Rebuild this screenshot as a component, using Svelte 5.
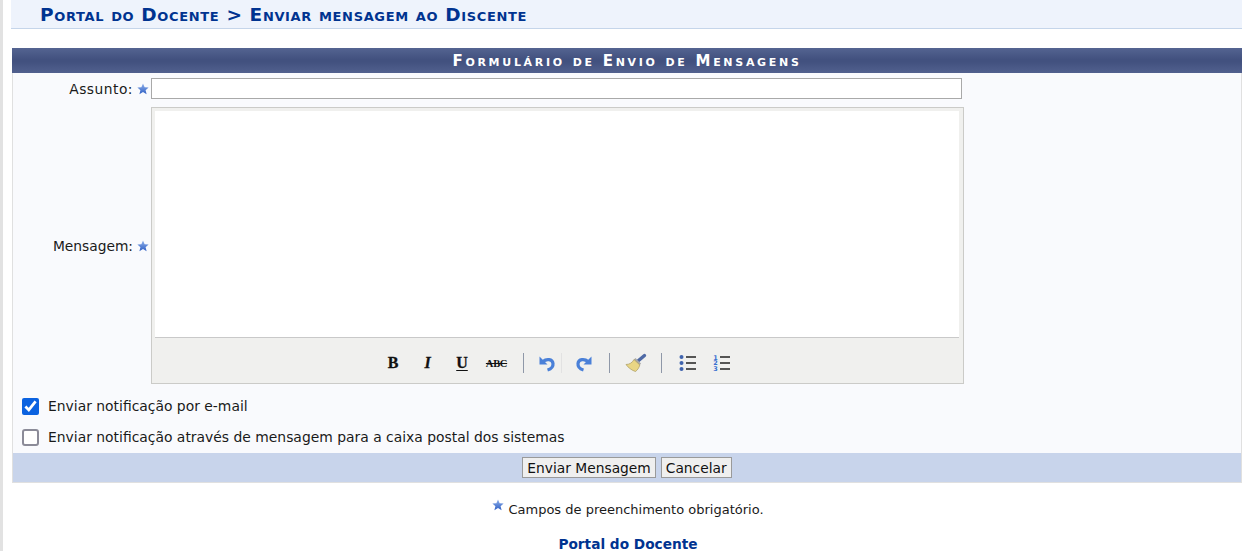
<script>
  const opts = [
    { label: 'Enviar notificação por e-mail', checked: true },
    { label: 'Enviar notificação através de mensagem para a caixa postal dos sistemas', checked: false }
  ];
</script>

<svg width="0" height="0" class="defs" aria-hidden="true">
  <defs>
    <linearGradient id="st" x1="0" y1="0" x2="0" y2="1">
      <stop offset="0" stop-color="#8fb0ea" />
      <stop offset="1" stop-color="#2f5fc4" />
    </linearGradient>
    <symbol id="star" viewBox="0 0 12 12">
      <path d="M6 .6 7.6 4.3 11.6 4.6 8.6 7.2 9.6 11.2 6 9.1 2.4 11.2 3.4 7.2.4 4.6 4.4 4.3Z" fill="url(#st)" />
    </symbol>
  </defs>
</svg>

<div class="page">
  <header class="crumb"><h2>Portal do Docente &gt; Enviar mensagem ao Discente</h2></header>

  <form class="form" onsubmit={(e) => e.preventDefault()}>
    <div class="caption">Formulário de Envio de Mensagens</div>
    <div class="body">
      <div class="fields">
        <label class="lbl wide" for="assunto">Assunto:</label>
        <svg class="star"><use href="#star" /></svg>
        <input id="assunto" class="text" type="text" />

        <span class="lbl">Mensagem:</span>
        <svg class="star"><use href="#star" /></svg>
        <div class="editor">
          <div class="area"></div>
          <div class="toolbar">
            <span class="btn b">B</span>
            <span class="btn i">I</span>
            <span class="btn u">U</span>
            <span class="btn s">ABC</span>
            <span class="sep s1"></span>
            <span class="btn undo">
              <svg width="20" height="20" viewBox="0 0 20 20">
                <path d="M6 8.500C9.500 5.500 15.500 6 16 10.500 16.300 13.500 14 16 10.500 17" fill="none" stroke="#4a80d8" stroke-width="3.200" />
                <path d="M2.500 3.500V11.500H10.500Z" fill="#4a80d8" />
              </svg>
            </span>
            <span class="sep faint"></span>
            <span class="btn redo">
              <svg width="20" height="20" viewBox="0 0 20 20">
                <path d="M14 8.500C10.500 5.500 4.500 6 4 10.500 3.700 13.500 6 16 9.500 17" fill="none" stroke="#4a80d8" stroke-width="3.200" />
                <path d="M17.500 3.500V11.500H9.500Z" fill="#4a80d8" />
              </svg>
            </span>
            <span class="sep s2"></span>
            <span class="btn broom">
              <svg width="22" height="20" viewBox="0 0 22 20">
                <path d="M13 8 19.500 2.500" stroke="#4f6aa5" stroke-width="3.400" stroke-linecap="round" />
                <path d="M10.500 5 16 10.500 14.500 12.500 8.500 7Z" fill="#a8a8a8" />
                <path d="M9 6.500 14.800 12C14 15 12.500 17 10.500 18.500 7 17.500 3 14.500 1 11.500 4.500 11.500 7.500 9.500 9 6.500Z" fill="#e9d684" stroke="#a89a60" stroke-width=".7" />
              </svg>
            </span>
            <span class="sep s3"></span>
            <span class="btn list">
              <svg width="18" height="18" viewBox="0 0 18 18">
                <circle cx="2.500" cy="3" r="2" fill="#3f63ad" /><circle cx="2.500" cy="9" r="2" fill="#3f63ad" /><circle cx="2.500" cy="15" r="2" fill="#3f63ad" />
                <path d="M7 3h10M7 9h10M7 15h10" stroke="#222" stroke-width="1.400" />
              </svg>
            </span>
            <span class="btn list">
              <svg width="18" height="18" viewBox="0 0 18 18">
                <g class="digits">
                  <text x="2.500" y="5.500">1</text>
                  <text x="2.500" y="11">2</text>
                  <text x="2.500" y="16.800">3</text>
                </g>
                <path d="M7 3h10M7 9h10M7 15h10" stroke="#222" stroke-width="1.400" />
              </svg>
            </span>
          </div>
        </div>
      </div>

      <div class="checks">
        {#each opts as o}
          <label class="check"><input type="checkbox" checked={o.checked} /><span>{o.label}</span></label>
        {/each}
      </div>

      <div class="actions">
        <button type="submit">Enviar Mensagem</button>
        <button type="button">Cancelar</button>
      </div>
    </div>
  </form>

  <p class="req"><svg class="star big"><use href="#star" /></svg><span>Campos de preenchimento obrigatório.</span></p>
  <a class="back" href="#top">Portal do Docente</a>
</div>

<style>
  :global(body) {
    margin: 0;
    background: #fff;
    font-family: "DejaVu Sans", Verdana, sans-serif;
    color: #111;
    overflow: hidden;
  }
  .defs { position: absolute; }
  .page {
    width: 1242px;
    height: 551px;
    padding-left: 11px;
    border-left: 3px solid #e2e2e2;
    box-sizing: border-box;
    overflow: hidden;
  }
  .crumb {
    height: 28px;
    background: #eef3fc;
    border-bottom: 1px solid #c5d5ea;
    padding-left: 29px;
    margin-left: -3px;
  }
  h2 {
    margin: 0;
    font-size: 18.500px;
    line-height: 30px;
    font-weight: 700;
    font-variant: small-caps;
    color: #003390;
    letter-spacing: .64px;
    white-space: nowrap;
  }
  .form {
    margin: 19px 0 0 -2px;
    display: block;
  }
  .caption {
    height: 25px;
    line-height: 26px;
    text-align: center;
    color: #fff;
    font-size: 15px;
    font-weight: 700;
    font-variant: small-caps;
    letter-spacing: 2.700px;
    background: linear-gradient(#546491, #42517f 45%, #42517f 55%, #51608e);
  }
  .body {
    background: #f9fafd;
    border: 1px solid #e0e0e0;
    border-top: 0;
  }
  .fields {
    display: grid;
    grid-template-columns: 120px 18px max-content;
    row-gap: 8px;
    align-items: center;
    padding-top: 5px;
  }
  .lbl {
    font-size: 13.800px;
    text-align: right;
    color: #1a1a1a;
  }
  .lbl.wide { letter-spacing: .5px; }
  .star {
    width: 12px;
    height: 12px;
    margin-left: 4px;
  }
  .text {
    width: 811px;
    height: 21px;
    box-sizing: border-box;
    border: 1px solid #a9a9a9;
    background: #fff;
    padding: 0;
    margin: 0;
  }
  .editor {
    width: 813px;
    height: 277px;
    box-sizing: border-box;
    border: 1px solid #cbcbc8;
    background: #f0f0ee;
    display: flex;
    flex-direction: column;
  }
  .area {
    height: 226px;
    margin: 3px 4px 0 3px;
    background: #fff;
    border-bottom: 1px solid #c9c9c9;
  }
  .toolbar {
    flex: 1;
    display: flex;
    align-items: center;
    justify-content: center;
    padding-top: 5px;
    color: #111;
  }
  .btn {
    width: 34.500px;
    height: 22px;
    display: flex;
    align-items: center;
    justify-content: center;
    font-family: "Liberation Serif", serif;
    font-weight: 700;
    font-size: 16px;
    -webkit-text-stroke: .3px #111;
  }
  .btn.i { font-style: italic; }
  .btn.u { text-decoration: underline; text-underline-offset: 2px; }
  .btn.s { font-size: 10.500px; text-decoration: line-through; font-weight: 700; -webkit-text-stroke: 0; letter-spacing: -.3px; }
  .digits {
    font: 700 6.500px "DejaVu Sans", sans-serif;
    fill: #3a6fd0;
    text-anchor: middle;
    stroke: none;
  }
  .sep {
    width: 1px;
    height: 20px;
    background: #8f98a8;
  }
  .sep.s1 { margin: 0 5px 0 9px; }
  .sep.faint { background: #e2e2e2; margin: 0 4px 0 -4px; }
  .undo, .redo { width: 36px; }
  .sep.s2 { margin: 0 9px 0 7px; }
  .sep.s3 { margin: 0 8px 0 8px; }
  .checks {
    display: flex;
    flex-direction: column;
    gap: 13px;
    padding: 13px 0 0 9px;
  }
  .check {
    display: flex;
    align-items: center;
    gap: 9px;
    font-size: 13.900px;
    height: 18px;
    color: #1a1a1a;
  }
  .check input {
    width: 17px;
    height: 17px;
    margin: 0;
    accent-color: #0b62e0;
  }
  .check input:not(:checked) {
    appearance: none;
    box-sizing: border-box;
    background: #fff;
    border: 2px solid #8b8b98;
    border-radius: 3px;
  }
  .actions {
    margin-top: 7px;
    height: 29px;
    background: #c8d4eb;
    display: flex;
    justify-content: center;
    align-items: center;
    gap: 5px;
  }
  button {
    height: 21px;
    padding: 0 4px;
    font: 13.800px "DejaVu Sans", Verdana, sans-serif;
    color: #111;
    background: #efefef;
    border: 1px solid #9a9a9a;
    border-radius: 0;
  }
  .req {
    margin: 14px 0 0;
    font-size: 13px;
    display: flex;
    justify-content: center;
    align-items: flex-end;
    gap: 4px;
    height: 20px;
    color: #1a1a1a;
  }
  .star.big { width: 12px; height: 12px; margin: 0 0 6px; }
  .back {
    display: block;
    margin-top: 19px;
    text-align: center;
    font-size: 13.700px;
    font-weight: 700;
    color: #003390;
    text-decoration: none;
  }
</style>
